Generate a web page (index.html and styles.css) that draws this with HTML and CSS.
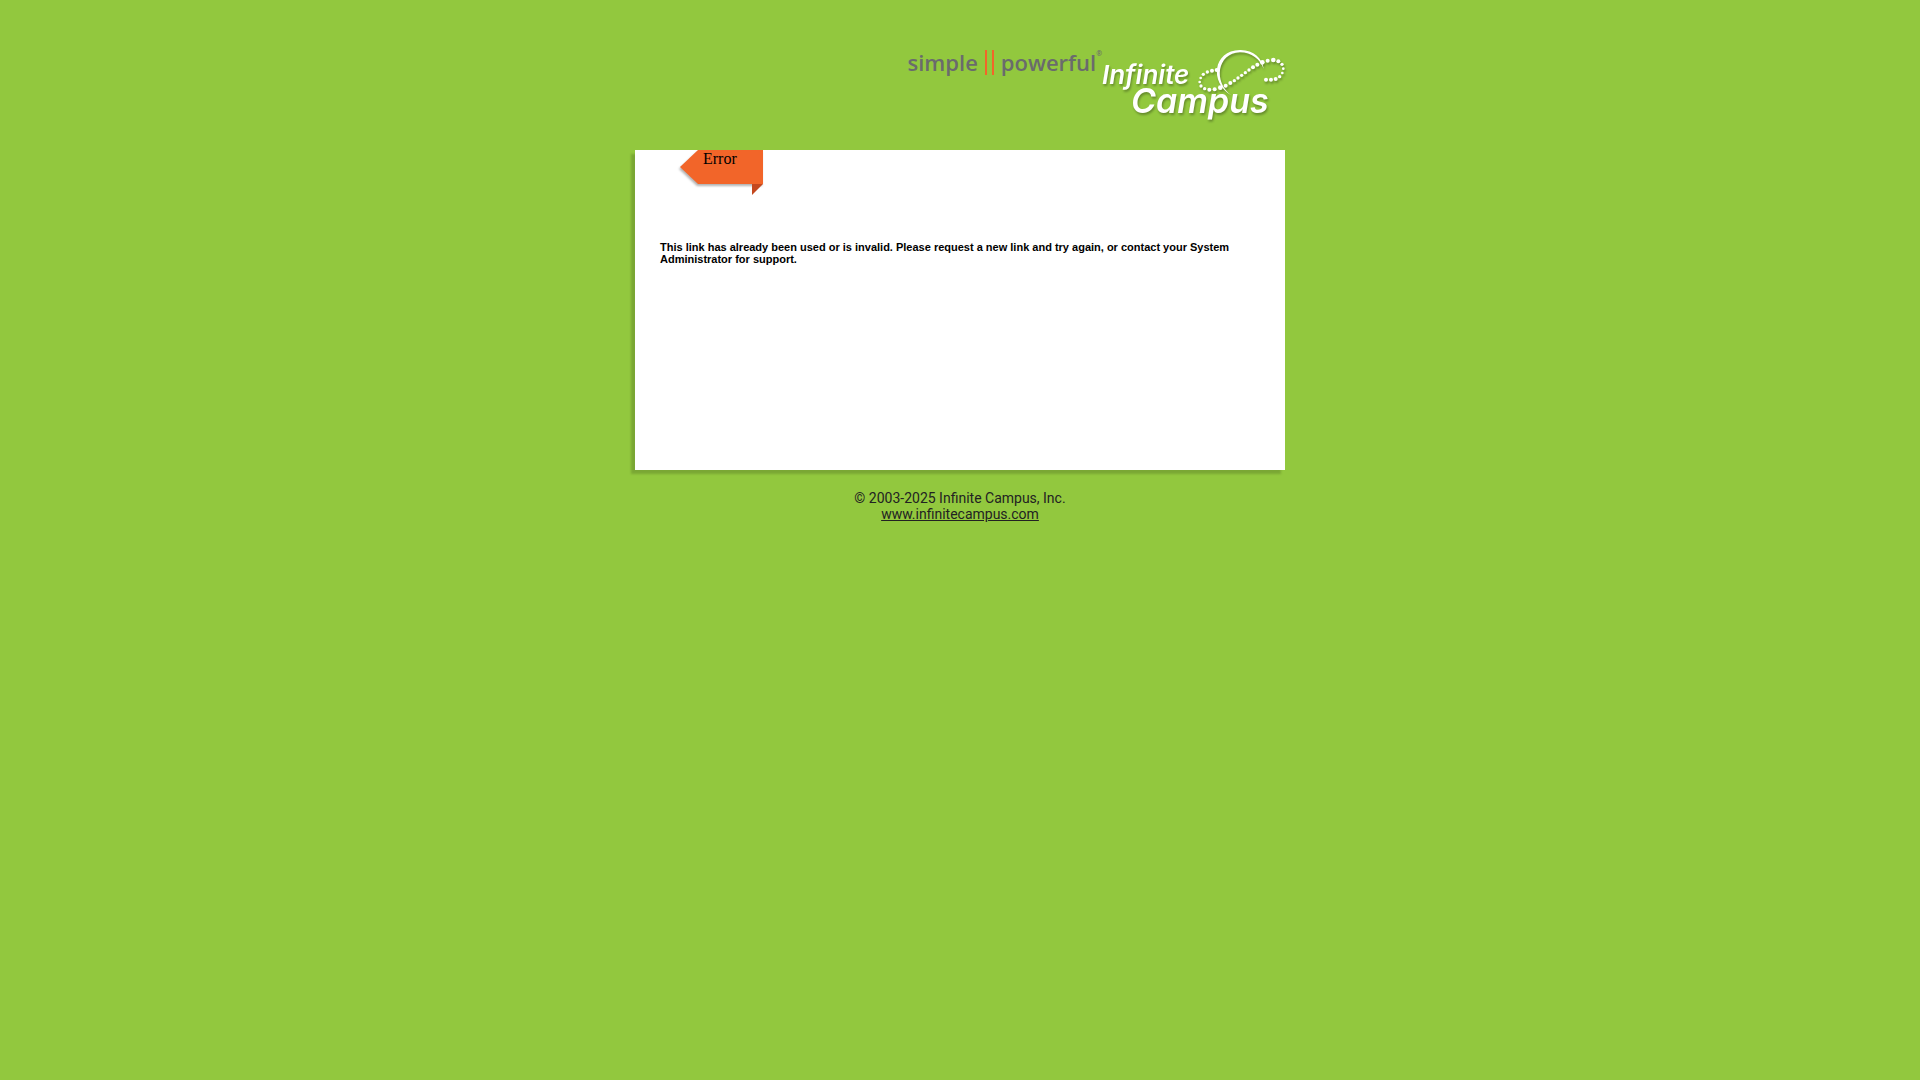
FILE: index.html
```html
<!DOCTYPE html>
<html lang="en">
<head>
    <meta charset="utf-8">
    <title>Infinite Campus</title>
    <link rel="stylesheet" href="styles.css">
</head>
<body>
    <div class="container">
        <div class="header">
            <div class="tagline">
                <span>simple</span>
                <span class="bars"></span>
                <span>powerful</span><span class="reg">®</span>
            </div>
            <svg class="logo" width="183" height="76" viewBox="0 0 183 76" role="img" aria-label="Infinite Campus">
                <text class="logo_infinite" x="0" y="34">Infinite</text>
                <text class="logo_campus" x="29" y="63">Campus</text>
                <!-- orbit -->
                <g transform="translate(88 -10) scale(0.3333)" fill="#fff">
                    <path d="M124 166C58 128 68 32 150 30C190 29 217 55 221 86C210 58 185 37 150 37C80 40 70 128 124 166Z"/>
                    <circle cx="80" cy="90" r="6"/>
                    <circle cx="66" cy="92" r="6"/>
                    <circle cx="52" cy="96" r="5"/>
                    <circle cx="40" cy="103" r="5"/>
                    <circle cx="32" cy="114" r="4"/>
                    <circle cx="29" cy="126" r="4"/>
                    <circle cx="33" cy="138" r="5"/>
                    <circle cx="44" cy="146" r="5"/>
                    <circle cx="58" cy="149" r="6"/>
                    <circle cx="74" cy="148" r="6"/>
                    <circle cx="91" cy="143" r="7"/>
                    <circle cx="107" cy="137" r="6"/>
                    <circle cx="121" cy="129" r="6"/>
                    <circle cx="133" cy="122" r="5"/>
                    <circle cx="144" cy="114" r="5"/>
                    <circle cx="155" cy="106" r="5"/>
                    <circle cx="166" cy="98" r="5"/>
                    <circle cx="177" cy="90" r="5"/>
                    <circle cx="189" cy="82" r="6"/>
                    <circle cx="202" cy="74" r="6"/>
                    <circle cx="217" cy="67" r="7"/>
                    <circle cx="233" cy="62" r="6"/>
                    <circle cx="250" cy="60" r="7"/>
                    <circle cx="265" cy="64" r="6"/>
                    <circle cx="276" cy="73" r="5"/>
                    <circle cx="280" cy="86" r="4"/>
                    <circle cx="277" cy="99" r="4"/>
                    <circle cx="269" cy="110" r="5"/>
                    <circle cx="257" cy="117" r="6"/>
                    <circle cx="243" cy="119" r="6"/>
                    <circle cx="228" cy="119" r="6"/>
                </g>
            </svg>
        </div>

        <div class="panel">
            <div class="ribbon">
                <svg class="ribbon_shape" width="83" height="46" viewBox="0 0 83 46" aria-hidden="true">
                    <polygon class="ribbon_front" points="18,0 83,0 83,34 18,34 0,17" fill="#f26529"/>
                    <polygon points="72,34 83,34 72,45" fill="#c4481f"/>
                </svg>
                <span class="ribbon_text">Error</span>
            </div>
            <p class="message">This link has already been used or is invalid. Please request a new link and try again, or contact your System Administrator for support.</p>
        </div>

        <div class="footer">
            © 2003-2025 Infinite Campus, Inc.<br>
            <a href="#">www.infinitecampus.com</a>
        </div>
    </div>
</body>
</html>
```

FILE: styles.css
```css
body {
    margin: 0;
    background-color: #92c83e;
    font-family: "Liberation Serif", serif;
}

.container {
    max-width: 650px;
    margin: 0 auto;
    padding-top: 50px;
}

.header {
    display: flex;
    justify-content: flex-end;
    align-items: flex-start;
    height: 100px;
}

.tagline {
    display: flex;
    align-items: flex-start;
    font-family: "Open Sans", sans-serif;
    font-size: 22px;
    font-weight: 600;
    line-height: 24px;
    color: #6a6b6d;
}

.bars {
    width: 5px;
    height: 25px;
    margin: 0 7px;
    border-left: 2px solid #f26529;
    border-right: 2px solid #f26529;
}

.reg {
    font-size: 7px;
    line-height: 8px;
}

.logo {
    overflow: visible;
    filter: drop-shadow(1px 2px 1px rgba(0, 0, 0, 0.3));
}

.logo_infinite,
.logo_campus {
    font-family: Inter, sans-serif;
    font-style: italic;
    font-weight: 600;
    fill: #fff;
}

.logo_infinite {
    font-size: 26px;
}

.logo_campus {
    font-size: 34px;
}

.panel {
    min-height: 320px;
    background-color: #fff;
    box-shadow: -4px 4px 2px rgba(0, 0, 0, 0.16);
}

.ribbon {
    position: relative;
    width: 83px;
    height: 46px;
    margin-left: 45px;
}

.ribbon_shape {
    position: absolute;
    top: 0;
    left: 0;
    overflow: visible;
}

.ribbon_front {
    filter: drop-shadow(-1px 2px 1px rgba(0, 0, 0, 0.3));
}

.ribbon_text {
    position: relative;
    display: block;
    padding-left: 23px;
    font-size: 16px;
    line-height: 18px;
}

.message {
    margin: 0;
    padding: 45px 25px 0;
    font-family: "Liberation Sans", Arial, sans-serif;
    font-size: 11px;
    font-weight: bold;
    line-height: 12px;
}

.footer {
    margin-top: 20px;
    font-family: Roboto, sans-serif;
    font-size: 14px;
    line-height: 16px;
    text-align: center;
    color: #222;
}

.footer a {
    color: #222;
}
```
